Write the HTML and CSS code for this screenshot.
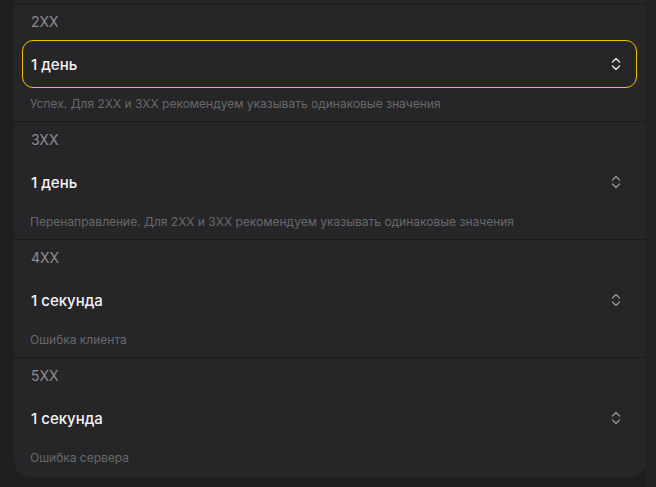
FILE: index.html
```html
<!DOCTYPE html>
<html lang="ru">
<head>
<meta charset="utf-8">
<link rel="stylesheet" href="styles.css">
</head>
<body>
<div class="page">
  <div class="card">
    <div class="row">
      <div class="label">2XX</div>
      <div class="select focused">
        <span class="value">1 день</span>
        <svg class="chev" width="10" height="14" viewBox="0 0 10 14"><path d="M1.5 5 L5 1.5 L8.5 5 M1.5 9 L5 12.5 L8.5 9" fill="none" stroke="currentColor" stroke-width="1.5" stroke-linecap="round" stroke-linejoin="round"/></svg>
      </div>
      <div class="hint">Успех. Для 2XX и 3XX рекомендуем указывать одинаковые значения</div>
    </div>
    <div class="row">
      <div class="label">3XX</div>
      <div class="select">
        <span class="value">1 день</span>
        <svg class="chev" width="10" height="14" viewBox="0 0 10 14"><path d="M1.5 5 L5 1.5 L8.5 5 M1.5 9 L5 12.5 L8.5 9" fill="none" stroke="currentColor" stroke-width="1.5" stroke-linecap="round" stroke-linejoin="round"/></svg>
      </div>
      <div class="hint">Перенаправление. Для 2XX и 3XX рекомендуем указывать одинаковые значения</div>
    </div>
    <div class="row">
      <div class="label">4XX</div>
      <div class="select">
        <span class="value">1 секунда</span>
        <svg class="chev" width="10" height="14" viewBox="0 0 10 14"><path d="M1.5 5 L5 1.5 L8.5 5 M1.5 9 L5 12.5 L8.5 9" fill="none" stroke="currentColor" stroke-width="1.5" stroke-linecap="round" stroke-linejoin="round"/></svg>
      </div>
      <div class="hint">Ошибка клиента</div>
    </div>
    <div class="row">
      <div class="label">5XX</div>
      <div class="select">
        <span class="value">1 секунда</span>
        <svg class="chev" width="10" height="14" viewBox="0 0 10 14"><path d="M1.5 5 L5 1.5 L8.5 5 M1.5 9 L5 12.5 L8.5 9" fill="none" stroke="currentColor" stroke-width="1.5" stroke-linecap="round" stroke-linejoin="round"/></svg>
      </div>
      <div class="hint">Ошибка сервера</div>
    </div>
  </div>
</div>
</body>
</html>
```
FILE: styles.css
```css
html, body {
  margin: 0;
  padding: 0;
  background: #1f1f20;
  height: 100%;
  overflow: hidden;
}
body {
  font-family: Inter, "Noto Sans", sans-serif;
}
.page {
  display: flex;
  height: 487px;
  padding-left: 14px;
  box-sizing: border-box;
  background: linear-gradient(to right, #1f1f20 0, #1f1f20 646px, #222223 646px);
}
.card {
  width: 632px;
  height: 477px;
  background: #262628;
  border-radius: 0 0 16px 16px;
  padding-top: 3px;
  box-sizing: border-box;
  display: flex;
  flex-direction: column;
}
.row {
  border-top: 1px solid #1c1c1d;
  padding: 8px 9px 9px 8px;
  display: flex;
  flex-direction: column;
}
.label {
  font-size: 14px;
  line-height: 20px;
  color: #8c8c8e;
  padding-left: 9px;
  margin-bottom: 8px;
}
.select {
  height: 48px;
  box-sizing: border-box;
  border: 1px solid transparent;
  border-radius: 11px;
  display: flex;
  align-items: center;
  justify-content: space-between;
  padding: 0 15px 0 8px;
  color: #8e8e90;
}
.select.focused {
  border: 1.5px solid #f2c200;
  color: #e2e2e4;
}
.value {
  font-size: 15px;
  font-weight: 500;
  color: #f4f4f6;
}
.chev {
  display: block;
}
.hint {
  margin-top: 8px;
  font-size: 12px;
  line-height: 16px;
  color: #68686a;
  padding-left: 8px;
}
```
